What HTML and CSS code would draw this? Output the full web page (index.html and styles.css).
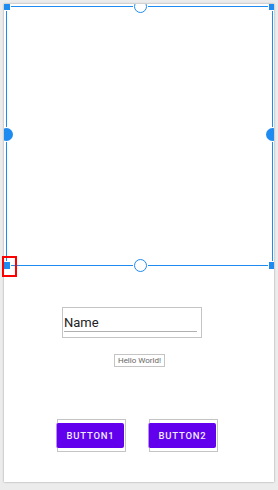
FILE: index.html
```html
<!DOCTYPE html>
<html lang="en">
<head>
    <meta charset="UTF-8">
    <meta name="viewport" content="width=device-width, initial-scale=1.0">
    <title>Layout preview</title>
    <link rel="stylesheet" href="styles.css">
</head>
<body>
    <div class="device">
        <!-- selected view with its constraint handles -->
        <div class="selection">
            <span class="square tl"></span>
            <span class="square tr"></span>
            <span class="square bl"></span>
            <span class="square br"></span>
            <span class="knob top"></span>
            <span class="knob bottom"></span>
            <span class="knob left"></span>
            <span class="knob right"></span>
        </div>

        <div class="name-field">
            <span class="name-text">Name</span>
        </div>

        <div class="hello">Hello World!</div>

        <div class="buttons">
            <div class="btn-frame"><div class="btn">BUTTON1</div></div>
            <div class="btn-frame"><div class="btn">BUTTON2</div></div>
        </div>
    </div>

    <!-- highlight drawn by the editor over the anchor -->
    <div class="marker"></div>
</body>
</html>
```

FILE: styles.css
```css
body, html {
    margin: 0;
    height: 100%;
    background: #ececec;
}

body {
    position: relative;
    padding: 4px 0 0 4px;
    box-sizing: border-box;
    font-family: Roboto, "Liberation Sans", sans-serif;
}

.device {
    position: relative;
    width: 270px;
    height: 478px;
    background: #fff;
    overflow: hidden;
    box-shadow: 0 0 2px rgba(0, 0, 0, 0.35);
}

.selection {
    position: relative;
    box-sizing: border-box;
    margin: 2px 0 0 2px;
    width: 267px;
    height: 260px;
    border: 1px solid #1e8bf0;
}

.square {
    position: absolute;
    width: 7px;
    height: 7px;
    background: #1e8bf0;
    box-shadow: 0 0 0 1px #fff;
}

.square.tl { left: -4px; top: -4px; }
.square.tr { right: -4px; top: -4px; }
.square.bl { left: -4px; bottom: -4px; }
.square.br { right: -4px; bottom: -4px; }

.knob {
    position: absolute;
    box-sizing: border-box;
    width: 13px;
    height: 13px;
    border-radius: 50%;
    box-shadow: 0 0 0 1px #fff;
}

.knob.top, .knob.bottom {
    left: 127px;
    background: #fff;
    border: 1.5px solid #1e8bf0;
}

.knob.top { top: -7px; }
.knob.bottom { bottom: -7px; }

.knob.left, .knob.right {
    top: 121px;
    background: #1e8bf0;
}

.knob.left { left: -7px; }
.knob.right { right: -7px; }

.marker {
    position: absolute;
    left: 2px;
    top: 256px;
    width: 15px;
    height: 21px;
    box-sizing: border-box;
    border: 2px solid #f00;
}

.name-field {
    box-sizing: border-box;
    margin: 41px 0 0 58px;
    width: 140px;
    height: 31px;
    border: 1px solid #c4c4c4;
    padding: 8px 4px 0 1px;
}

.name-text {
    display: block;
    font-size: 13px;
    line-height: 14px;
    color: #222;
    border-bottom: 1px solid #b0b0b0;
    padding-bottom: 1px;
}

.hello {
    box-sizing: border-box;
    margin: 16px 0 0 110px;
    width: 51px;
    height: 13px;
    border: 1px solid #c4c4c4;
    font-size: 8px;
    line-height: 11px;
    color: #666;
    text-align: center;
    white-space: nowrap;
}

.buttons {
    display: flex;
    gap: 23px;
    margin: 52px 0 0 53px;
}

.btn-frame {
    box-sizing: border-box;
    width: 69px;
    height: 33px;
    border: 1px solid #c4c4c4;
    padding-top: 3px;
}

.btn {
    margin-left: -2px;
    width: 68px;
    height: 25px;
    background: #6200ee;
    border-left: 1px solid #b98cff;
    border-radius: 2px;
    color: #f0eaff;
    font-size: 9.5px;
    font-weight: 500;
    letter-spacing: 0.8px;
    line-height: 25px;
    text-align: center;
    box-sizing: border-box;
}
```
